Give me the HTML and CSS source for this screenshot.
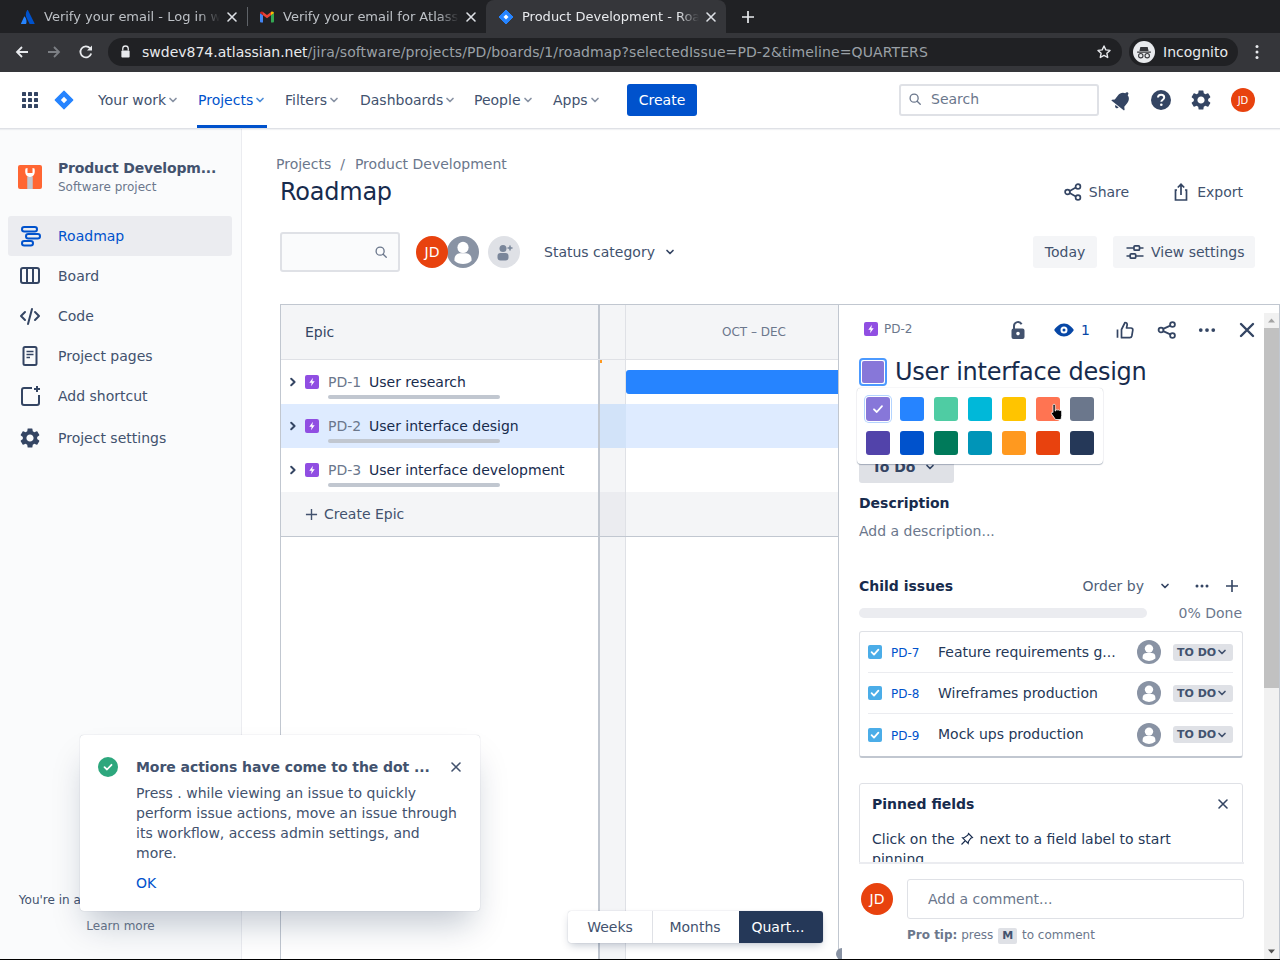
FILE: index.html
```html
<!DOCTYPE html>
<html lang="en">
<head>
<meta charset="utf-8">
<title>Product Development - Roadmap</title>
<link rel="stylesheet" href="styles.css">
</head>
<body>
<svg class="defs" width="0" height="0" aria-hidden="true">
  <defs>
    <symbol id="chev" viewBox="0 0 12 12"><path d="M3 4.5 6 7.5 9 4.5" fill="none" stroke="currentColor" stroke-width="1.7" stroke-linecap="round" stroke-linejoin="round"/></symbol>
    <symbol id="right" viewBox="0 0 12 12"><path d="M4.2 2.8 7.6 6 4.2 9.2" fill="none" stroke="currentColor" stroke-width="2" stroke-linecap="round" stroke-linejoin="round"/></symbol>
    <symbol id="gear" viewBox="0 0 24 24"><path fill="currentColor" d="M19.14 12.94c.04-.3.06-.61.06-.94 0-.32-.02-.64-.07-.94l2.03-1.58a.49.49 0 0 0 .12-.61l-1.92-3.32a.488.488 0 0 0-.59-.22l-2.39.96c-.5-.38-1.03-.7-1.62-.94l-.36-2.54a.484.484 0 0 0-.48-.41h-3.84c-.24 0-.43.17-.47.41l-.36 2.54c-.59.24-1.13.57-1.62.94l-2.39-.96c-.22-.08-.47 0-.59.22L2.74 8.87c-.12.21-.08.47.12.61l2.03 1.58c-.05.3-.09.63-.09.94s.02.64.07.94l-2.03 1.58a.49.49 0 0 0-.12.61l1.92 3.32c.12.22.37.29.59.22l2.39-.96c.5.38 1.03.7 1.62.94l.36 2.54c.05.24.24.41.48.41h3.84c.24 0 .44-.17.47-.41l.36-2.54c.59-.24 1.13-.56 1.62-.94l2.39.96c.22.08.47 0 .59-.22l1.92-3.32c.12-.22.07-.47-.12-.61l-2.01-1.58zM12 15.6c-1.98 0-3.6-1.62-3.6-3.6s1.62-3.6 3.6-3.6 3.6 1.62 3.6 3.6-1.62 3.6-3.6 3.6z"/></symbol>
    <symbol id="epic" viewBox="0 0 14 14"><rect width="14" height="14" rx="2" fill="#904ee2"/><path d="M8 2.8 4.3 7.7H6.7L6 11.2 9.7 6.3H7.3Z" fill="#fff"/></symbol>
    <symbol id="person" viewBox="0 0 24 24"><circle cx="12" cy="12" r="12" fill="#8993a4"/><circle cx="12" cy="8.6" r="4.2" fill="#fff"/><path d="M5.6 17a4 4 0 0 1 4-4h4.8a4 4 0 0 1 4 4v1.5A9.5 9.5 0 0 1 12 21a9.5 9.5 0 0 1-6.4-2.5Z" fill="#fff"/></symbol>
    <symbol id="jira" viewBox="0 0 24 24"><path fill="#2684ff" d="M12 1.5 22.5 12 12 22.5 1.5 12Z" stroke="#2684ff" stroke-width="1.5" stroke-linejoin="round"/><path fill="#fff" d="M12 8.2 15.8 12 12 15.8 8.2 12Z"/></symbol>
    <symbol id="dots" viewBox="0 0 16 16"><circle cx="3" cy="8" r="1.5" fill="currentColor"/><circle cx="8" cy="8" r="1.5" fill="currentColor"/><circle cx="13" cy="8" r="1.5" fill="currentColor"/></symbol>
    <symbol id="x" viewBox="0 0 12 12"><path d="M2 2 10 10M10 2 2 10" fill="none" stroke="currentColor" stroke-width="1.6" stroke-linecap="round"/></symbol>
    <symbol id="mag" viewBox="0 0 16 16"><circle cx="7" cy="7" r="4.6" fill="none" stroke="currentColor" stroke-width="1.5"/><path d="M10.5 10.5 14 14" stroke="currentColor" stroke-width="1.5" stroke-linecap="round"/></symbol>
    <symbol id="tick" viewBox="0 0 14 14"><rect width="14" height="14" rx="2" fill="#4bade8"/><path d="M3.6 7.2 6 9.6 10.4 4.6" fill="none" stroke="#fff" stroke-width="1.8" stroke-linecap="round" stroke-linejoin="round"/></symbol>
  </defs>
</svg>

<div class="app">
  <div class="tabbar">
    <div class="tab">
      <svg class="favicon" viewBox="0 0 16 16"><path fill="#2684ff" d="M4.7 7.6c-.2-.3-.5-.2-.6.1L1 14.6c-.1.3.1.5.3.5h4.4c.2 0 .3-.1.4-.2 1-2 .4-5-1.4-7.3Z"/><path fill="#0052cc" d="M7.1 1.2c-1.7 2.7-1.6 5.7-.5 7.9l2.9 5.6c.1.2.2.3.4.3h4.4c.3 0 .4-.2.3-.5L8 1.2c-.2-.3-.7-.3-.9 0Z"/></svg>
      <span class="tab-title">Verify your email - Log in w</span>
      <svg class="tab-x"><use href="#x"/></svg>
    </div>
    <div class="tab-sep"></div>
    <div class="tab">
      <svg class="favicon" viewBox="0 0 16 16"><path fill="#4285f4" d="M1 13.5V4l3 2.2v7.3H2a1 1 0 0 1-1-1Z"/><path fill="#34a853" d="M12 13.5V6.2L15 4v8.5a1 1 0 0 1-1 1Z"/><path fill="#ea4335" d="M4 6.2V3L8 6l4-3v3.2L8 9.2Z"/><path fill="#c5221f" d="M1 4.2C1 2.8 2.6 2 3.7 2.8L4 3v3.2L1 4Z"/><path fill="#fbbc04" d="M15 4.2c0-1.4-1.6-2.2-2.7-1.4L12 3v3.2L15 4Z"/></svg>
      <span class="tab-title">Verify your email for Atlass</span>
      <svg class="tab-x"><use href="#x"/></svg>
    </div>
    <div class="tab tab-active">
      <svg class="favicon" viewBox="0 0 24 24"><use href="#jira"/></svg>
      <span class="tab-title">Product Development - Roa</span>
      <svg class="tab-x"><use href="#x"/></svg>
    </div>
    <svg class="tab-plus" viewBox="0 0 14 14"><path d="M7 1V13M1 7H13" stroke="#e8eaed" stroke-width="1.7"/></svg>
  </div>

  <div class="toolbar">
    <svg class="tool" viewBox="0 0 16 16"><path d="M14 8H3M8 3 3 8l5 5" fill="none" stroke="#e8eaed" stroke-width="1.8"/></svg>
    <svg class="tool" viewBox="0 0 16 16"><path d="M2 8H13M8 3l5 5-5 5" fill="none" stroke="#7c7f84" stroke-width="1.8"/></svg>
    <svg class="tool" viewBox="0 0 16 16"><path d="M13.2 9.5A5.5 5.5 0 1 1 12 4.2" fill="none" stroke="#e8eaed" stroke-width="1.8"/><path d="M14 1.5V6.5H9Z" fill="#e8eaed"/></svg>
    <div class="omnibox">
      <svg class="lock" viewBox="0 0 12 14"><path d="M3 6V4a3 3 0 0 1 6 0v2" fill="none" stroke="#e8eaed" stroke-width="1.4"/><rect x="1.5" y="6" width="9" height="7.5" rx="1" fill="#e8eaed"/></svg>
      <span class="url"><span class="url-host">swdev874.atlassian.net</span>/jira/software/projects/PD/boards/1/roadmap?selectedIssue=PD-2&amp;timeline=QUARTERS</span>
      <svg class="star" viewBox="0 0 16 16"><path d="M8 2l1.8 3.9 4.2.5-3.1 2.9.8 4.2L8 11.4l-3.7 2.1.8-4.2L2 6.4l4.2-.5Z" fill="none" stroke="#e8eaed" stroke-width="1.4" stroke-linejoin="round"/></svg>
    </div>
    <div class="incognito">
      <svg class="inc-icon" viewBox="0 0 24 24"><circle cx="12" cy="12" r="12" fill="#e8eaed"/><path d="M8 6.5h8l1 4.5H7ZM4.5 11.5h15v1.3h-15Z" fill="#35363a"/><circle cx="8.5" cy="16" r="2.4" fill="none" stroke="#35363a" stroke-width="1.2"/><circle cx="15.5" cy="16" r="2.4" fill="none" stroke="#35363a" stroke-width="1.2"/></svg>
      <span>Incognito</span>
    </div>
    <svg class="kebab" viewBox="0 0 4 16"><circle cx="2" cy="2.5" r="1.5" fill="#e8eaed"/><circle cx="2" cy="8" r="1.5" fill="#e8eaed"/><circle cx="2" cy="13.500" r="1.500" fill="#e8eaed"/></svg>
  </div>

  <header class="topnav">
    <svg class="apps" viewBox="0 0 16 16"><g fill="#344563"><rect x="0" y="0" width="4" height="4" rx=".6"/><rect x="6" y="0" width="4" height="4" rx=".6"/><rect x="12" y="0" width="4" height="4" rx=".6"/><rect x="0" y="6" width="4" height="4" rx=".6"/><rect x="6" y="6" width="4" height="4" rx=".6"/><rect x="12" y="6" width="4" height="4" rx=".6"/><rect x="0" y="12" width="4" height="4" rx=".6"/><rect x="6" y="12" width="4" height="4" rx=".6"/><rect x="12" y="12" width="4" height="4" rx=".6"/></g></svg>
    <svg class="nav-logo"><use href="#jira"/></svg>
    <nav class="menu">
      <span class="menu-item menu-w1">Your work<svg class="mchev"><use href="#chev"/></svg></span>
      <span class="menu-item menu-on">Projects<svg class="mchev"><use href="#chev"/></svg></span>
      <span class="menu-item menu-w3">Filters<svg class="mchev"><use href="#chev"/></svg></span>
      <span class="menu-item menu-w4">Dashboards<svg class="mchev"><use href="#chev"/></svg></span>
      <span class="menu-item menu-w5">People<svg class="mchev"><use href="#chev"/></svg></span>
      <span class="menu-item menu-w6">Apps<svg class="mchev"><use href="#chev"/></svg></span>
    </nav>
    <button class="create">Create</button>
    <div class="nav-search">
      <svg class="nav-mag"><use href="#mag"/></svg>
      <span>Search</span>
    </div>
    <svg class="nav-bell" viewBox="0 0 24 24"><path fill="#344563" transform="rotate(38 12 12)" d="M12 22c1.100 0 2-.9 2-2h-4c0 1.100.9 2 2 2zm6-6v-5c0-3.070-1.640-5.640-4.500-6.320V4c0-.83-.67-1.500-1.500-1.500s-1.500.67-1.500 1.500v.68C7.630 5.360 6 7.920 6 11v5l-2 2v1h16v-1l-2-2z"/></svg>
    <svg class="nav-help" viewBox="0 0 20 20"><circle cx="10" cy="10" r="10" fill="#344563"/><path d="M7 7.600C7 5.800 8.400 4.800 10.100 4.800 11.900 4.800 13.200 5.900 13.200 7.500 13.200 9.600 10.300 9.800 10.300 11.800" fill="none" stroke="#fff" stroke-width="2"/><circle cx="10.300" cy="14.800" r="1.300" fill="#fff"/></svg>
    <svg class="nav-gear"><use href="#gear"/></svg>
    <span class="avatar avatar-24">JD</span>
  </header>

  <div class="work">
    <aside class="sidebar">
      <div class="project">
        <svg class="project-icon" viewBox="0 0 24 24"><rect width="24" height="24" rx="2" fill="#ff6633"/><path d="M12 11.500V24" stroke="#c1c7d0" stroke-width="5.500"/><path d="M7.500 3.500C6.500 8 8 12 12 12s5.500-4 4.500-8.500L14.500 3V8h-5V3Z" fill="#fff"/></svg>
        <div class="project-text">
          <div class="project-name">Product Developm...</div>
          <div class="project-type">Software project</div>
        </div>
      </div>
      <ul class="side-list">
        <li class="side-item side-on">
          <svg class="side-ic" viewBox="0 0 24 24"><g fill="none" stroke="#0052cc" stroke-width="2"><rect x="4" y="3" width="15" height="4.500" rx="2.200"/><rect x="8" y="10" width="14" height="4.500" rx="2.200"/><rect x="4" y="17" width="11" height="4.500" rx="2.200"/></g></svg>
          <span>Roadmap</span>
        </li>
        <li class="side-item">
          <svg class="side-ic" viewBox="0 0 24 24"><g fill="none" stroke="#344563" stroke-width="2"><rect x="3" y="4" width="18" height="15" rx="2"/><path d="M9 4V19M15 4V19"/></g></svg>
          <span>Board</span>
        </li>
        <li class="side-item">
          <svg class="side-ic" viewBox="0 0 24 24"><path d="M7 8 3 12l4 4M17 8l4 4-4 4M14 5l-4 15" fill="none" stroke="#344563" stroke-width="2" stroke-linecap="round" stroke-linejoin="round"/></svg>
          <span>Code</span>
        </li>
        <li class="side-item">
          <svg class="side-ic" viewBox="0 0 24 24"><rect x="5.500" y="3" width="13" height="18" rx="1.500" fill="none" stroke="#344563" stroke-width="2"/><path d="M8.500 7.500h7M8.500 10.500h7M8.500 13.500h3.500" stroke="#344563" stroke-width="1.600"/></svg>
          <span>Project pages</span>
        </li>
        <li class="side-item">
          <svg class="side-ic" viewBox="0 0 24 24"><path d="M14 4H6A2 2 0 0 0 4 6V19A2 2 0 0 0 6 21H19A2 2 0 0 0 21 19V11" fill="none" stroke="#344563" stroke-width="2"/><path d="M19 2V8M16 5H22" stroke="#344563" stroke-width="2"/></svg>
          <span>Add shortcut</span>
        </li>
        <li class="side-item side-settings">
          <svg class="side-ic side-gear"><use href="#gear"/></svg>
          <span>Project settings</span>
        </li>
      </ul>
      <div class="side-foot">
        <div class="side-note">You're in a team-managed project</div>
        <div class="side-learn">Learn more</div>
      </div>
    </aside>

    <main class="main">
      <div class="crumbs"><span>Projects</span><span class="crumb-sep">/</span><span>Product Development</span></div>
      <div class="title-row">
        <h1 class="page-title">Roadmap</h1>
        <div class="title-actions">
          <span class="title-action">
            <svg class="act-ic" viewBox="0 0 20 20"><g fill="none" stroke="#344563" stroke-width="1.700"><circle cx="15" cy="4.500" r="2.400"/><circle cx="15" cy="15.500" r="2.400"/><circle cx="4.500" cy="10" r="2.400"/><path d="M6.700 8.900 12.800 5.600M6.700 11.100 12.800 14.400"/></g></svg>Share
          </span>
          <span class="title-action">
            <svg class="act-ic" viewBox="0 0 20 20"><path d="M6 8H4.500V18H15.500V8H14" fill="none" stroke="#344563" stroke-width="1.700"/><path d="M10 13V2.500M6.800 5.500 10 2.300l3.200 3.200" fill="none" stroke="#344563" stroke-width="1.700"/></svg>Export
          </span>
        </div>
      </div>
      <div class="filter-row">
        <div class="filter-search"><svg class="filter-mag"><use href="#mag"/></svg></div>
        <div class="avatars">
          <span class="avatar avatar-32 avatar-front">JD</span>
          <svg class="avatar-p"><use href="#person"/></svg>
        </div>
        <span class="add-person">
          <svg viewBox="0 0 20 20"><circle cx="9" cy="6.500" r="3.500" fill="#7a869a"/><rect x="3.500" y="11" width="11" height="7.500" rx="3" fill="#7a869a"/><path d="M16 3.500v5M13.500 6h5" stroke="#7a869a" stroke-width="1.500"/></svg>
        </span>
        <span class="status-filter">Status category<svg class="status-chev"><use href="#chev"/></svg></span>
        <div class="filter-right">
          <button class="btn-today">Today</button>
          <button class="btn-view">
            <svg viewBox="0 0 20 20"><g fill="none" stroke="#344563" stroke-width="1.700"><path d="M1.500 6H9M15 6h3.500M1.500 14H5M11 14h7.500"/><rect x="9" y="3.800" width="5.500" height="4.400" rx="1"/><rect x="5.200" y="11.800" width="5.500" height="4.400" rx="1"/></g></svg>View settings
          </button>
        </div>
      </div>

      <section class="roadmap">
        <div class="chart">
          <div class="row row-head">
            <div class="cell-epic head-epic">Epic</div>
            <div class="cell-gut"></div>
            <div class="cell-time"><span class="quarter">OCT – DEC</span></div>
          </div>
          <div class="row row-issue">
            <div class="cell-epic">
              <div class="issue-line">
                <svg class="issue-chev"><use href="#right"/></svg>
                <svg class="issue-epic"><use href="#epic"/></svg>
                <span class="issue-key">PD-1</span><span class="issue-name">User research</span>
              </div>
              <div class="issue-bar"></div>
            </div>
            <div class="cell-gut"><span class="today-mark"></span></div>
            <div class="cell-time"><div class="bar"></div></div>
          </div>
          <div class="row row-issue row-sel">
            <div class="cell-epic">
              <div class="issue-line">
                <svg class="issue-chev"><use href="#right"/></svg>
                <svg class="issue-epic"><use href="#epic"/></svg>
                <span class="issue-key">PD-2</span><span class="issue-name">User interface design</span>
              </div>
              <div class="issue-bar"></div>
            </div>
            <div class="cell-gut"></div>
            <div class="cell-time"></div>
          </div>
          <div class="row row-issue">
            <div class="cell-epic">
              <div class="issue-line">
                <svg class="issue-chev"><use href="#right"/></svg>
                <svg class="issue-epic"><use href="#epic"/></svg>
                <span class="issue-key">PD-3</span><span class="issue-name">User interface development</span>
              </div>
              <div class="issue-bar"></div>
            </div>
            <div class="cell-gut"></div>
            <div class="cell-time"></div>
          </div>
          <div class="row row-create">
            <div class="cell-epic create-epic">
              <svg viewBox="0 0 14 14"><path d="M7 1V13M1 7H13" stroke="#42526e" stroke-width="1.500"/></svg>Create Epic
            </div>
            <div class="cell-gut"></div>
            <div class="cell-time"></div>
          </div>
          <div class="row row-fill">
            <div class="cell-epic"></div>
            <div class="cell-gut"></div>
            <div class="cell-time"></div>
          </div>
        </div>

        <aside class="panel">
          <div class="panel-main">
            <div class="panel-scroll">
              <div class="panel-head">
                <svg class="ph-epic"><use href="#epic"/></svg>
                <span class="ph-key">PD-2</span>
                <svg class="ph-ic ph-lock" viewBox="0 0 20 20"><path d="M6 9V6a4 4 0 0 1 7.600-1.700" fill="none" stroke="#42526e" stroke-width="2"/><path d="M5.500 8.500h9a2 2 0 0 1 2 2V17a2 2 0 0 1-2 2h-9a2 2 0 0 1-2-2v-6.500a2 2 0 0 1 2-2ZM10 11.800a1.800 1.800 0 1 0 0 3.600 1.800 1.800 0 0 0 0-3.600Z" fill="#42526e" fill-rule="evenodd"/></svg>
                <svg class="ph-ic ph-eye" viewBox="0 0 20 20"><path fill-rule="evenodd" d="M10 3.500c4.500 0 8 3.500 9.800 6.500C18 13 14.500 16.500 10 16.500S2 13 .2 10C2 7 5.500 3.500 10 3.500ZM10 6.500a3.500 3.500 0 1 0 0 7 3.500 3.500 0 0 0 0-7ZM10 8.500a1.500 1.500 0 1 1 0 3 1.500 1.500 0 0 1 0-3Z" fill="#0747a6"/></svg>
                <span class="ph-count">1</span>
                <svg class="ph-ic ph-thumb" viewBox="0 0 20 20"><path d="M6.500 9.500 10 2.500c1.300 0 2.200 1 2.200 2.300L11.500 8H16c1.200 0 2 1 1.800 2.200l-1 5.800c-.2 1-1 1.700-2 1.700H6.500ZM2.500 9.500v8.200" fill="none" stroke="#344563" stroke-width="1.700" stroke-linejoin="round"/></svg>
                <svg class="ph-ic ph-share" viewBox="0 0 20 20"><g fill="none" stroke="#344563" stroke-width="1.800"><circle cx="15.500" cy="4.500" r="2.400"/><circle cx="15.500" cy="15.500" r="2.400"/><circle cx="4" cy="10" r="2.400"/><path d="M6.200 8.900 13.300 5.600M6.200 11.100 13.300 14.400"/></g></svg>
                <svg class="ph-ic ph-dots"><use href="#dots"/></svg>
                <svg class="ph-ic ph-x"><use href="#x"/></svg>
              </div>
              <div class="title-line">
                <span class="color-btn"><span class="color-fill"></span></span>
                <h2 class="issue-title">User interface design</h2>
              </div>
              <button class="status-btn">To Do<svg class="status-btn-chev"><use href="#chev"/></svg></button>
              <h3 class="sec-h sec-desc">Description</h3>
              <div class="desc-add">Add a description...</div>
              <div class="child-head">
                <h3 class="sec-h">Child issues</h3>
                <span class="order">Order by<svg class="order-chev"><use href="#chev"/></svg></span>
                <svg class="child-dots"><use href="#dots"/></svg>
                <svg class="child-plus" viewBox="0 0 14 14"><path d="M7 1V13M1 7H13" stroke="#344563" stroke-width="1.600"/></svg>
              </div>
              <div class="progress-row">
                <div class="progress"></div>
                <span class="progress-text">0% Done</span>
              </div>
              <div class="child-table">
                <div class="child-row">
                  <svg class="child-check"><use href="#tick"/></svg>
                  <span class="child-key">PD-7</span>
                  <span class="child-name">Feature requirements g...</span>
                  <svg class="child-person"><use href="#person"/></svg>
                  <span class="lozenge">TO DO<svg><use href="#chev"/></svg></span>
                </div>
                <div class="child-row">
                  <svg class="child-check"><use href="#tick"/></svg>
                  <span class="child-key">PD-8</span>
                  <span class="child-name">Wireframes production</span>
                  <svg class="child-person"><use href="#person"/></svg>
                  <span class="lozenge">TO DO<svg><use href="#chev"/></svg></span>
                </div>
                <div class="child-row">
                  <svg class="child-check"><use href="#tick"/></svg>
                  <span class="child-key">PD-9</span>
                  <span class="child-name">Mock ups production</span>
                  <svg class="child-person"><use href="#person"/></svg>
                  <span class="lozenge">TO DO<svg><use href="#chev"/></svg></span>
                </div>
              </div>
              <div class="pinned">
                <div class="pinned-head">
                  <span class="pinned-title">Pinned fields</span>
                  <svg class="pinned-x"><use href="#x"/></svg>
                </div>
                <p class="pinned-text">Click on the <svg class="pin" viewBox="0 0 14 14"><path d="M8.500 1.500 12.500 5.500 10.800 6.200 8.300 9.800 8.200 11.500 2.500 5.800 4.200 5.700 7.800 3.200ZM5 9 1.500 12.500" fill="none" stroke="#172b4d" stroke-width="1.100"/></svg> next to a field label to start pinning</p>
              </div>
            </div>
            <div class="panel-foot">
              <div class="comment-row">
                <span class="avatar avatar-32">JD</span>
                <div class="comment-box">Add a comment...</div>
              </div>
              <div class="protip"><b>Pro tip:</b> press <span class="kbd">M</span> to comment</div>
            </div>
            <div class="palette">
              <span class="sw sw-sel sw1"><svg viewBox="0 0 14 14"><path d="M3 7.300 5.800 10 11 4.200" fill="none" stroke="#fff" stroke-width="1.800" stroke-linecap="round" stroke-linejoin="round"/></svg></span>
              <span class="sw sw2"></span><span class="sw sw3"></span><span class="sw sw4"></span><span class="sw sw5"></span><span class="sw sw6"></span><span class="sw sw7"></span>
              <span class="sw sw8"></span><span class="sw sw9"></span><span class="sw sw10"></span><span class="sw sw11"></span><span class="sw sw12"></span><span class="sw sw13"></span><span class="sw sw14"></span>
            </div>
            <svg class="cursor" viewBox="0 0 14 18"><path d="M4 1.200c.8 0 1.200.5 1.200 1.200V8h.6V6.900c.8-.6 1.700-.3 1.900.3.800-.5 1.700-.3 2 .4.900-.4 2 .2 2 1.200v3.700L11 16.500H5.500L1.500 10.800c-.5-1 .6-2 1.500-1.300V2.400c0-.7.300-1.200 1-1.200Z" fill="#000" stroke="#fff" stroke-width=".8"/></svg>
          </div>
          <div class="scrollbar">
            <svg class="scroll-arrow" viewBox="0 0 15 15"><path d="M4 9.500 7.500 5.500 11 9.500Z" fill="#a3a3a3"/></svg>
            <div class="scroll-thumb"></div>
            <svg class="scroll-arrow scroll-down" viewBox="0 0 15 15"><path d="M4 5.500 7.500 9.500 11 5.500Z" fill="#505050"/></svg>
          </div>
        </aside>
        <div class="view-switch">
          <span class="vs vs-w">Weeks</span>
          <span class="vs vs-m">Months</span>
          <span class="vs vs-q">Quart...</span>
        </div>
        <span class="corner-dot"></span>
      </section>
    </main>
  </div>
</div>

<div class="flag">
  <svg class="flag-ok" viewBox="0 0 20 20"><circle cx="10" cy="10" r="10" fill="#2da77d"/><path d="M6.500 10.200 9 12.500 13.500 7.800" fill="none" stroke="#fff" stroke-width="1.800" stroke-linecap="round" stroke-linejoin="round"/></svg>
  <div class="flag-body">
    <div class="flag-title">More actions have come to the dot ...</div>
    <p class="flag-text">Press . while viewing an issue to quickly perform issue actions, move an issue through its workflow, access admin settings, and more.</p>
    <span class="flag-ok-link">OK</span>
  </div>
  <svg class="flag-x"><use href="#x"/></svg>
</div>
</body>
</html>
```

FILE: styles.css
```css
* { box-sizing: border-box; }
html, body { margin: 0; padding: 0; height: 960px; overflow: hidden; background: #000; }
body { font-family: "DejaVu Sans", sans-serif; font-size: 14px; color: #172b4d; position: relative; }
h1, h2, h3, p, ul { margin: 0; padding: 0; font-weight: normal; }
li { list-style: none; }
button { font-family: inherit; border: 0; }
svg { display: block; flex: none; }
.defs { position: absolute; }

.app { height: 959px; width: 1280px; display: flex; flex-direction: column; background: #fff; overflow: hidden; }

/* browser chrome */
.tabbar { height: 33px; flex: none; background: #202124; display: flex; align-items: flex-end; padding-left: 8px; position: relative; }
.tab { width: 239px; height: 33px; display: flex; align-items: center; padding: 0 6px 0 12px; color: #bdc1c6; font-size: 13px; flex: none; }
.tab-sep { width: 1px; height: 19px; background: #5f6368; margin: 0 -1px 7px 0; flex: none; align-self: flex-end; }
.tab-active { background: #35363a; border-radius: 8px 8px 0 0; color: #e8eaed; width: 240px; }
.favicon { width: 16px; height: 16px; margin-right: 8px; }
.tab-title { flex: 1; white-space: nowrap; overflow: hidden; -webkit-mask-image: linear-gradient(to right, #000 88%, transparent 100%); mask-image: linear-gradient(to right, #000 88%, transparent 100%); }
.tab-x { width: 12px; height: 12px; margin: 0 3px 0 6px; color: #dee1e6; }
.tab-plus { width: 14px; height: 14px; margin: 0 0 9px 15px; align-self: flex-end; }

.toolbar { height: 39px; flex: none; background: #35363a; display: flex; align-items: center; padding: 0 0 2px 14px; }
.tool { width: 16px; height: 16px; margin-right: 16px; }
.omnibox { width: 1014px; margin-left: -2px; height: 28px; background: #202124; border-radius: 14px; display: flex; align-items: center; padding-left: 12px; flex: none; }
.lock { width: 11px; height: 13px; margin-right: 11px; }
.url { color: #9aa0a6; font-size: 14px; white-space: nowrap; flex: 1; letter-spacing: .1px; }
.url-host { color: #e8eaed; letter-spacing: 0; }
.star { width: 16px; height: 16px; margin-right: 10px; }
.incognito { margin-left: 7px; width: 109px; height: 28px; background: #202124; border-radius: 14px; display: flex; align-items: center; padding-left: 4px; color: #e8eaed; font-size: 14px; flex: none; }
.inc-icon { width: 22px; height: 22px; margin-right: 8px; }
.kebab { width: 4px; height: 16px; margin-left: 17px; }

/* top nav */
.topnav { height: 56px; flex: none; background: #fff; display: flex; align-items: center; padding-left: 22px; box-shadow: 0 1px 0 #dfe1e6, 0 2px 1px rgba(9,30,66,.06); position: relative; z-index: 3; }
.apps { width: 16px; height: 16px; }
.nav-logo { width: 20px; height: 20px; margin-left: 16px; }
.menu { display: flex; margin-left: 24px; height: 56px; }
.menu-item { display: flex; align-items: center; color: #42526e; font-size: 14px; height: 56px; white-space: nowrap; }
.mchev { width: 12px; height: 12px; color: #8993a4; margin-left: 1px; }
.menu-on { width: 70px; margin: 0 18px 0 -1px; padding-left: 1px; color: #0052cc; box-shadow: inset 0 -3px 0 #0052cc; }
.menu-on .mchev { color: #4c8cd9; }
.menu-w1 { width: 100px; }
.menu-w3 { width: 75px; }
.menu-w4 { width: 114px; }
.menu-w5 { width: 79px; }
.menu-w6 { width: 74px; }
.create { width: 70px; height: 32px; background: #0052cc; color: #fff; border-radius: 3px; font-size: 14px; padding: 0; }
.nav-search { width: 200px; height: 32px; margin-left: 202px; border: 2px solid #dfe1e6; border-radius: 3px; display: flex; align-items: center; padding: 0 0 2px 7px; color: #6b778c; font-size: 14px; background: #fff; }
.nav-mag { width: 14px; height: 14px; color: #6b778c; margin-right: 9px; }
.nav-bell { width: 24px; height: 24px; margin-left: 11px; }
.nav-help { width: 20px; height: 20px; margin-left: 17px; }
.nav-gear { margin-left: 18px; width: 24px; height: 24px; color: #344563; }
.avatar { display: flex; align-items: center; justify-content: center; background: #e8420e; color: #fff; border-radius: 50%; flex: none; }
.avatar-24 { width: 24px; height: 24px; font-size: 10px; margin-left: 18px; }
.avatar-32 { width: 32px; height: 32px; font-size: 14px; }

/* work area */
.work { flex: 1; display: flex; min-height: 0; }
.sidebar { width: 242px; flex: none; background: #fafbfc; border-right: 1px solid #ebecf0; display: flex; flex-direction: column; }
.project { display: flex; padding: 31px 0 0 18px; height: 88px; }
.project-icon { width: 24px; height: 24px; margin-top: 6px; }
.project-text { margin-left: 16px; }
.project-name { font-weight: bold; font-size: 14px; line-height: 18px; color: #42526e; white-space: nowrap; letter-spacing: -.17px; }
.project-type { font-size: 12px; line-height: 18px; margin-top: 1px; color: #6b778c; }
.side-list { padding: 0 9px 0 8px; }
.side-item { height: 40px; display: flex; align-items: center; padding-left: 10px; color: #42526e; font-size: 14px; border-radius: 3px; }
.side-on { background: #ebecf0; color: #0052cc; }
.side-ic { width: 24px; height: 24px; margin-right: 16px; color: #344563; }
.side-settings { margin-top: 2px; }
.side-foot { margin-top: auto; padding: 0 0 24px; text-align: center; font-size: 12px; }
.side-note { color: #42526e; line-height: 18px; white-space: nowrap; }
.side-learn { color: #6b778c; line-height: 18px; margin-top: 8px; }

.main { flex: 1; min-width: 0; display: flex; flex-direction: column; padding-left: 38px; }
.crumbs { margin: 27px 0 0 -4px; height: 18px; line-height: 18px; color: #6b778c; font-size: 14px; display: flex; }
.crumb-sep { margin: 0 10px 0 9px; }
.title-row { display: flex; align-items: center; justify-content: space-between; height: 32px; margin-top: 3px; padding-right: 37px; }
.page-title { font-size: 24px; line-height: 32px; color: #172b4d; letter-spacing: -.01em; }
.title-actions { display: flex; gap: 42px; }
.title-action { display: flex; align-items: center; color: #42526e; font-size: 14px; }
.act-ic { width: 20px; height: 20px; margin-right: 6px; }
.filter-row { display: flex; align-items: center; height: 40px; margin-top: 24px; padding-right: 25px; }
.filter-search { width: 120px; height: 40px; border: 2px solid #dfe1e6; border-radius: 3px; background: #fafbfc; display: flex; align-items: center; justify-content: flex-end; padding-right: 10px; }
.filter-mag { width: 14px; height: 14px; color: #6b778c; }
.avatars { display: flex; margin-left: 16px; }
.avatar-front { position: relative; z-index: 1; }
.avatar-p { width: 32px; height: 32px; margin-left: -1px; }
.add-person { width: 32px; height: 32px; border-radius: 50%; background: #dfe1e6; margin-left: 9px; display: flex; align-items: center; justify-content: center; }
.add-person svg { width: 20px; height: 20px; }
.status-filter { display: flex; align-items: center; margin-left: 24px; color: #42526e; font-size: 14px; }
.status-chev { width: 12px; height: 12px; margin-left: 9px; color: #344563; }
.filter-right { margin-left: auto; display: flex; gap: 16px; }
.btn-today { width: 64px; height: 32px; background: #f4f5f7; color: #42526e; border-radius: 3px; font-size: 14px; padding: 0; }
.btn-view { width: 142px; height: 32px; background: #f4f5f7; color: #42526e; border-radius: 3px; font-size: 14px; display: flex; align-items: center; padding: 0 0 0 12px; white-space: nowrap; }
.btn-view svg { width: 20px; height: 20px; margin-right: 6px; }

/* roadmap */
.roadmap { margin-top: 32px; flex: 1; min-height: 0; border: 1px solid #c1c7d0; border-bottom: 0; display: flex; position: relative; }
.chart { flex: 1; min-width: 0; display: flex; flex-direction: column; }
.row { display: flex; flex: none; }
.cell-epic { width: 317px; flex: none; }
.cell-gut { width: 28px; flex: none; border-left: 2px solid #c1c7d0; border-right: 1px solid #dfe1e6; background: #f4f5f7; position: relative; }
.cell-time { flex: 1; min-width: 0; overflow: hidden; }
.row-head { height: 55px; background: #f4f5f7; border-bottom: 1px solid #dfe1e6; }
.head-epic { padding-left: 24px; line-height: 54px; color: #344563; font-size: 14px; }
.quarter { display: block; width: 256px; line-height: 54px; text-align: center; font-size: 12px; color: #6b778c; }
.row-issue { height: 44px; }
.row-sel { background: #deebff; }
.row-sel .cell-gut { background: #d2e3f9; border-right-color: #d2e3f9; }
.row-create { height: 45px; background: #f4f5f7; border-bottom: 1px solid #c1c7d0; }
.row-create .cell-gut { background: #ebecf0; }
.row-fill { flex: 1; }
.issue-line { display: flex; align-items: center; height: 18px; margin-top: 13px; font-size: 14px; white-space: nowrap; }
.issue-chev { width: 12px; height: 12px; margin: 0 6px; color: #344563; }
.issue-epic { width: 14px; height: 14px; margin-right: 9px; }
.issue-key { width: 41px; color: #6b778c; }
.issue-name { color: #172b4d; }
.issue-bar { width: 172px; height: 4px; margin: 4px 0 0 47px; background: #c1c7d0; border-radius: 2px; }
.today-mark { display: block; width: 2px; height: 3px; background: #ff991f; margin-top: 0; }
.bar { height: 24px; width: 212px; margin-top: 10px; background: #2684ff; border-radius: 3px 0 0 3px; }
.create-epic { display: flex; align-items: center; padding-left: 24px; color: #42526e; font-size: 14px; }
.create-epic svg { width: 13px; height: 13px; margin-right: 6px; }

/* issue panel */
.panel { width: 441px; flex: none; background: #fff; border-left: 1px solid #c1c7d0; display: flex; }
.panel-main { width: 425px; flex: none; display: flex; flex-direction: column; position: relative; }
.panel-scroll { height: 557px; flex: none; overflow: hidden; padding: 0 21px 0 20px; }
.panel-head { height: 49px; display: flex; align-items: center; padding: 0 0 0 5px; margin-right: -15px; }
.ph-epic { width: 14px; height: 14px; margin-top: -2px; }
.ph-key { margin: -2px 0 0 6px; font-size: 12px; color: #6b778c; width: 124px; }
.ph-ic { width: 20px; height: 20px; }
.ph-lock { color: #42526e; margin-right: 26px; }
.ph-eye { width: 20px; height: 20px; }
.ph-count { color: #0747a6; font-size: 14px; width: 34px; margin-left: 7px; }
.ph-thumb { margin-right: 22px; }
.ph-share { margin-right: 20px; }
.ph-dots { width: 20px; height: 20px; color: #344563; margin-right: 21px; padding: 0; }
.ph-x { width: 18px; height: 18px; color: #344563; }
.title-line { display: flex; align-items: center; height: 36px; }
.color-btn { width: 28px; height: 28px; border: 2px solid #4c9aff; border-radius: 4px; padding: 1px; background: #fff; }
.color-fill { display: block; width: 100%; height: 100%; background: #8777d9; border-radius: 2px; }
.issue-title { margin-left: 8px; font-size: 24px; line-height: 36px; color: #172b4d; white-space: nowrap; letter-spacing: -.01em; }
.status-btn { display: flex; align-items: center; margin-top: 61px; width: 95px; height: 32px; background: #dfe1e6; border-radius: 3px; padding: 0 0 0 13px; font-weight: bold; font-size: 14px; color: #344563; }
.status-btn-chev { width: 12px; height: 12px; margin-left: 9px; color: #344563; }
.sec-h { font-size: 14px; font-weight: bold; line-height: 18px; color: #172b4d; }
.sec-desc { margin-top: 11px; }
.desc-add { margin-top: 10px; line-height: 18px; color: #6b778c; font-size: 14px; }
.child-head { display: flex; align-items: center; height: 18px; margin-top: 37px; }
.order { margin-left: auto; display: flex; align-items: center; color: #505f79; font-size: 14px; }
.order-chev { width: 12px; height: 12px; margin-left: 15px; color: #344563; }
.child-dots { width: 16px; height: 16px; margin-left: 23px; color: #344563; padding: 0; }
.child-plus { width: 14px; height: 14px; margin: 0 4px 0 15px; }
.progress-row { display: flex; align-items: center; height: 18px; margin-top: 9px; }
.progress { width: 288px; height: 10px; background: #ebecf0; border-radius: 5px; }
.progress-text { margin-left: auto; color: #6b778c; font-size: 14px; margin-right: 1px; }
.child-table { margin-top: 9px; border: 1px solid #dfe1e6; border-bottom: 2px solid #c1c7d0; border-radius: 3px; padding: 0 9px 0 8px; height: 127px; }
.child-row { height: 41px; display: flex; align-items: center; border-bottom: 1px solid #ebecf0; font-size: 14px; }
.child-row:last-child { border-bottom: 0; }
.child-check { width: 14px; height: 14px; }
.child-key { width: 47px; margin-left: 9px; font-size: 12px; color: #0052cc; flex: none; padding-top: 2px; }
.child-name { flex: 1; color: #253858; white-space: nowrap; padding-bottom: 1px; }
.child-person { width: 24px; height: 24px; }
.lozenge { margin-left: 12px; width: 60px; height: 17px; background: #dfe1e6; border-radius: 3px; color: #42526e; font-size: 11px; font-weight: bold; display: flex; align-items: center; padding-left: 4px; white-space: nowrap; }
.lozenge svg { width: 12px; height: 12px; color: #42526e; }
.pinned { margin-top: 25px; border: 1px solid #dfe1e6; border-radius: 3px 3px 0 0; padding: 11px 12px; height: 120px; }
.pinned-head { display: flex; align-items: center; justify-content: space-between; height: 18px; }
.pinned-title { font-weight: bold; font-size: 14px; color: #172b4d; }
.pinned-x { width: 12px; height: 12px; margin-right: 1px; color: #344563; }
.pinned-text { margin-top: 16px; font-size: 14px; line-height: 20px; color: #253858; max-width: 320px; }
.pin { display: inline-block; width: 14px; height: 14px; vertical-align: -2px; margin: 0 1px; }
.panel-foot { flex: 1; margin: 0 20px 0 20px; border-top: 2px solid #ebecf0; padding-top: 15px; }
.comment-row { display: flex; align-items: center; }
.comment-row .avatar { margin: 0 14px 0 2px; }
.comment-box { flex: 1; height: 40px; line-height: 38px; border: 1px solid #dfe1e6; border-radius: 3px; padding-left: 20px; color: #6b778c; font-size: 14px; }
.protip { margin: 6px 0 0 48px; font-size: 12px; line-height: 20px; color: #6b778c; white-space: nowrap; }
.protip b { color: #6b778c; }
.kbd { display: inline-block; width: 19px; height: 16px; line-height: 16px; background: #dfe1e6; border-radius: 2px; text-align: center; font-weight: bold; color: #42526e; margin: 0 1px; font-size: 11px; }

.palette { position: absolute; left: 18px; top: 83px; width: 246px; height: 76px; background: #fff; border-radius: 4px; box-shadow: 0 1px 1px rgba(9,30,66,.25), 0 0 1px rgba(9,30,66,.31); display: grid; grid-template-columns: repeat(7, 24px); grid-auto-rows: 24px; gap: 10px; padding: 9px; z-index: 2; }
.sw { display: block; border-radius: 3px; }
.sw-sel { box-shadow: 0 0 0 1px #fff, 0 0 0 2px #b3d4ff; display: flex; align-items: center; justify-content: center; }
.sw-sel svg { width: 14px; height: 14px; }
.sw1 { background: #8777d9; }
.sw2 { background: #2684ff; }
.sw3 { background: #4fcca3; }
.sw4 { background: #00b8d9; }
.sw5 { background: #ffc400; }
.sw6 { background: #ff7452; }
.sw7 { background: #6b778c; }
.sw8 { background: #5243aa; }
.sw9 { background: #0052cc; }
.sw10 { background: #007a5a; }
.sw11 { background: #0095b8; }
.sw12 { background: #ff991f; }
.sw13 { background: #e8420e; }
.sw14 { background: #253858; }
.cursor { position: absolute; left: 211px; top: 98px; width: 14px; height: 18px; z-index: 3; }

.scrollbar { width: 15px; flex: none; margin-top: 8px; background: #f1f1f1; display: flex; flex-direction: column; }
.scroll-arrow { width: 15px; height: 15px; flex: none; }
.scroll-thumb { height: 360px; background: #c1c1c1; }
.scroll-down { margin-top: auto; }

.view-switch { position: absolute; left: 287px; top: 606px; display: flex; height: 32px; background: #fff; border-radius: 3px; box-shadow: 0 4px 8px -2px rgba(9,30,66,.25), 0 0 1px rgba(9,30,66,.31); overflow: hidden; font-size: 14px; color: #42526e; z-index: 4; }
.vs { display: flex; align-items: center; justify-content: center; }
.vs-w { width: 85px; border-right: 1px solid #dfe1e6; }
.vs-m { width: 86px; padding-right: 2px; }
.vs-q { width: 84px; padding-right: 6px; background: #253858; color: #fff; }
.corner-dot { position: absolute; left: 555px; top: 643px; width: 6px; height: 12px; border-radius: 6px 0 0 6px; background: #8993a4; z-index: 1; }

/* flag */
.flag { position: absolute; left: 80px; top: 735px; width: 400px; height: 176px; background: #fff; border-radius: 4px; box-shadow: 0 20px 32px -8px rgba(9,30,66,.25), 0 0 1px rgba(9,30,66,.31); display: flex; padding: 22px 16px 0 18px; z-index: 5; }
.flag-ok { width: 20px; height: 20px; }
.flag-body { margin-left: 18px; width: 325px; }
.flag-title { font-weight: bold; font-size: 14px; line-height: 20px; color: #42526e; white-space: nowrap; letter-spacing: -.06px; }
.flag-text { margin-top: 6px; font-size: 14px; line-height: 20px; color: #42526e; }
.flag-ok-link { display: block; margin-top: 10px; line-height: 20px; color: #0052cc; font-size: 14px; }
.flag-x { width: 12px; height: 12px; margin: 4px 0 0 -11px; color: #42526e; }
```
